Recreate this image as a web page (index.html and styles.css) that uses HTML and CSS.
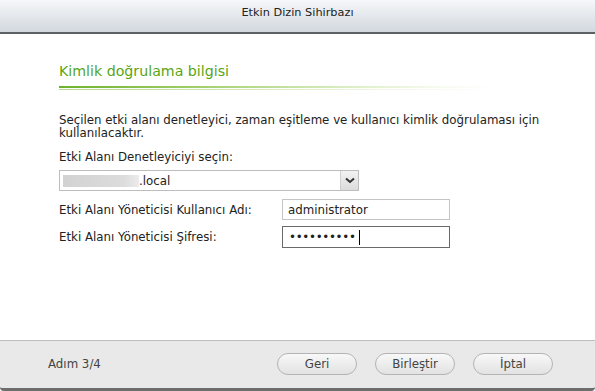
FILE: index.html
```html
<!DOCTYPE html>
<html lang="tr">
<head>
<meta charset="utf-8">
<link rel="stylesheet" href="styles.css">
</head>
<body>
<div class="dialog">
  <header class="titlebar">Etkin Dizin Sihirbazı</header>
  <main class="content">
    <h1 class="section-title">Kimlik doğrulama bilgisi</h1>
    <div class="rule"><span class="rule-thick"></span><span class="rule-thin"></span></div>
    <p class="intro">Seçilen etki alanı denetleyici, zaman eşitleme ve kullanıcı kimlik doğrulaması için<br>kullanılacaktır.</p>
    <div class="label">Etki Alanı Denetleyiciyi seçin:</div>
    <div class="select">
      <span class="select-value"><span class="redacted"></span>.local</span>
      <span class="select-arrow">
        <svg width="10" height="7" viewBox="0 0 10 7"><path d="M1 1.5 L5 5 L9 1.5" fill="none" stroke="#333" stroke-width="2"/></svg>
      </span>
    </div>
    <div class="field-row">
      <span class="field-label">Etki Alanı Yöneticisi Kullanıcı Adı:</span>
      <span class="input">administrator</span>
    </div>
    <div class="field-row">
      <span class="field-label">Etki Alanı Yöneticisi Şifresi:</span>
      <span class="input focused">••••••••••<span class="caret"></span></span>
    </div>
  </main>
  <footer class="footer">
    <span class="step">Adım 3/4</span>
    <div class="buttons">
      <button class="btn">Geri</button>
      <button class="btn">Birleştir</button>
      <button class="btn">İptal</button>
    </div>
  </footer>
</div>
</body>
</html>
```

FILE: styles.css
```css
html, body {
  margin: 0;
  padding: 0;
  background: #ffffff;
}
body {
  font-family: "DejaVu Sans", Verdana, sans-serif;
  color: #222;
  width: 595px;
  height: 391px;
  overflow: hidden;
}
.dialog {
  display: flex;
  flex-direction: column;
  width: 595px;
  height: 391px;
}
.titlebar {
  height: 34px;
  box-sizing: border-box;
  border-bottom: 2px solid #5c6166;
  background: linear-gradient(#f6f7f9, #d2d8df);
  text-align: center;
  font-size: 11.3px;
  line-height: 25px;
  color: #222;
}
.content {
  flex: 1;
  padding: 29px 0 0 59px;
  display: flex;
  flex-direction: column;
}
.section-title {
  margin: 0;
  font-size: 14.2px;
  font-weight: normal;
  color: #58a614;
  line-height: 16px;
}
.rule {
  margin-top: 7px;
  width: 435px;
  display: flex;
  flex-direction: column;
  gap: 1px;
}
.rule-thick {
  height: 2px;
  background: linear-gradient(90deg, #6cb12a 0%, #9fcd68 30%, #d9ecc2 65%, #f4f9ec 85%, rgba(255,255,255,0) 100%);
}
.rule-thin {
  height: 1px;
  background: linear-gradient(90deg, #b6da8c 0%, #d0e7b2 40%, #f0f7e6 75%, rgba(255,255,255,0) 100%);
}
.intro {
  margin: 24px 0 0;
  font-size: 11.8px;
  line-height: 13px;
  color: #222;
}
.label {
  margin-top: 10px;
  font-size: 11.8px;
  line-height: 14px;
}
.select {
  margin-top: 6px;
  width: 300px;
  height: 21px;
  box-sizing: border-box;
  border: 1px solid #bdbdbd;
  display: flex;
  align-items: stretch;
  background: #fff;
}
.select-value {
  flex: 1;
  display: flex;
  align-items: center;
  padding-left: 3px;
  font-size: 11.8px;
}
.redacted {
  width: 76px;
  height: 12px;
  background: linear-gradient(90deg, #d2d2d2, #dcdcdc 80%, #ececec);
}
.select-arrow {
  width: 17px;
  border-left: 1px solid #d0d0d0;
  background: linear-gradient(#f2f2f2, #dcdcdc);
  display: flex;
  align-items: center;
  justify-content: center;
}
.field-row {
  display: flex;
  align-items: center;
  margin-top: 8px;
  font-size: 11.8px;
}
.field-row + .field-row {
  margin-top: 6px;
}
.field-label {
  width: 223px;
}
.input {
  width: 168px;
  height: 21px;
  box-sizing: border-box;
  border: 1px solid #c4c4c4;
  padding-left: 5px;
  display: flex;
  align-items: center;
  background: #fff;
}
.input.focused {
  height: 22px;
  border-color: #6a6a6a;
  padding-left: 6px;
  letter-spacing: -0.3px;
}
.caret {
  display: inline-block;
  width: 1px;
  height: 15px;
  background: #000;
  margin-left: 3px;
}
.footer {
  height: 51px;
  box-sizing: border-box;
  border-top: 1px solid #bdbdbd;
  border-bottom: 3px solid #6d6d6d;
  border-radius: 0 0 4px 4px;
  background: #e9e9e9;
  display: flex;
  align-items: center;
  justify-content: space-between;
  padding: 0 42px 2px 48px;
}
.step {
  font-size: 11.8px;
  color: #444;
}
.buttons {
  display: flex;
  gap: 18px;
}
.btn {
  width: 80px;
  height: 22px;
  border: 1px solid #b4b4b4;
  border-radius: 11px;
  background: linear-gradient(#f8f8f8, #e2e2e2);
  font-family: "DejaVu Sans", Verdana, sans-serif;
  font-size: 11.8px;
  color: #444;
  padding: 0;
}
```
